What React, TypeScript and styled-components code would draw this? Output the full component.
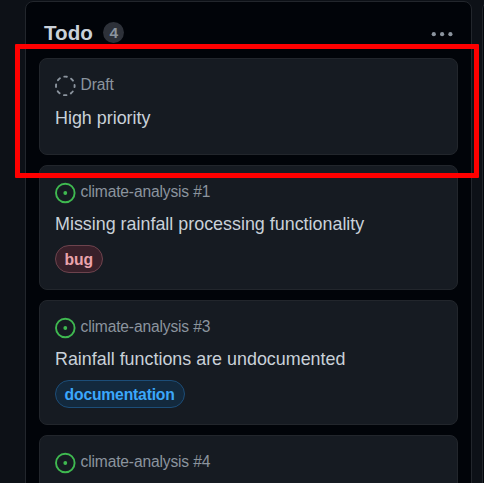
import React from "react";
import styled, { createGlobalStyle } from "styled-components";

const GlobalStyle = createGlobalStyle`
  * { box-sizing: border-box; }
  body {
    margin: 0;
    background: #0d1117;
    font-family: "Liberation Sans", Arial, Helvetica, sans-serif;
    overflow: hidden;
  }
`;

const Board = styled.main`
  position: relative;
  display: flex;
  gap: 10px;
  width: 484px;
  height: 483px;
  padding: 1px 0 0 25px;
  overflow: hidden;
`;

const Column = styled.section`
  flex: none;
  width: 447px;
  height: 520px;
  padding: 0 13px;
  background: #010409;
  border: 1px solid #22262c;
  border-radius: 8px;
`;

const ColumnHeader = styled.header`
  display: flex;
  align-items: center;
  height: 56px;
  padding: 5px 5px 0 5px;
`;

const ColumnTitle = styled.h2`
  margin: 0;
  color: #c9d1d9;
  font-size: 20.6px;
  line-height: 26px;
  font-weight: 700;
`;

const Counter = styled.span`
  width: 21px;
  height: 21px;
  margin-left: 10.5px;
  border-radius: 50%;
  background: #2d3139;
  color: #8b949e;
  font-size: 15.5px;
  line-height: 21px;
  font-weight: 700;
  text-align: center;
`;

const MenuButton = styled.button`
  display: flex;
  margin: 3px 0 0 auto;
  padding: 0;
  border: 0;
  background: none;
`;

const CardList = styled.div`
  display: flex;
  flex-direction: column;
  gap: 10px;
`;

const Card = styled.article<{ $height: number }>`
  height: ${(p) => p.$height}px;
  padding: 15px;
  background: #161b22;
  border: 1px solid #22262c;
  border-radius: 8px;
`;

const Meta = styled.div`
  display: flex;
  height: 22px;
  gap: 4.6px;
  color: #8b949e;
  font-size: 15.6px;
  letter-spacing: -0.16px;
  line-height: 22px;
  white-space: nowrap;

  svg { flex: none; margin-top: 1px; }
`;

const Title = styled.h3<{ $lowered: boolean }>`
  margin: ${(p) => (p.$lowered ? 10 : 9)}px 0 0;
  color: #c9d1d9;
  font-size: 17.9px;
  line-height: 24px;
  font-weight: 400;
  white-space: nowrap;
`;

const Label = styled.span<{ $tone: "bug" | "documentation" }>`
  display: inline-block;
  height: 28px;
  margin-top: 9px;
  padding: 0 9px 0 8.6px;
  border: 1px solid ${(p) => (p.$tone === "bug" ? "#6d434d" : "#1c4d78")};
  border-radius: 14px;
  background: ${(p) => (p.$tone === "bug" ? "#39202a" : "#13293d")};
  color: ${(p) => (p.$tone === "bug" ? "#eba3ac" : "#3ba7fb")};
  font-size: 15.7px;
  letter-spacing: -0.18px;
  line-height: 27px;
  font-weight: 700;
`;

const Highlight = styled.div`
  position: absolute;
  left: 15px;
  top: 44px;
  width: 464px;
  height: 134px;
  border: 5px solid #ff0000;
  border-radius: 1px;
`;

const DraftIcon = () => (
  <svg width="21" height="21" viewBox="0 0 21 21" fill="none">
    <circle
      cx="10.3"
      cy="10.9"
      r="9.3"
      stroke="#8b949e"
      strokeWidth="1.9"
      strokeLinecap="round"
      strokeDasharray="2.6 4.704"
      strokeDashoffset="1.3"
    />
  </svg>
);

const OpenIcon = () => (
  <svg width="21" height="22" viewBox="0 0 21 22" fill="none">
    <circle cx="10.3" cy="11" r="9.3" stroke="#3fb950" strokeWidth="1.9" />
    <circle cx="10.3" cy="11" r="1.9" fill="#3fb950" />
  </svg>
);

const KebabIcon = () => (
  <svg width="22" height="6" viewBox="0 0 22 6" fill="#8b949e">
    <circle cx="2.8" cy="3.2" r="2.1" />
    <circle cx="11.1" cy="3.2" r="2.1" />
    <circle cx="19.4" cy="3.2" r="2.1" />
  </svg>
);

type Item = {
  meta: string;
  title: string;
  label?: "bug" | "documentation";
};

const items: Item[] = [
  { meta: "Draft", title: "High priority" },
  { meta: "climate-analysis #1", title: "Missing rainfall processing functionality", label: "bug" },
  { meta: "climate-analysis #3", title: "Rainfall functions are undocumented", label: "documentation" },
  { meta: "climate-analysis #4", title: "" },
];

export default function App() {
  return (
    <>
      <GlobalStyle />
      <Board>
        <Column>
          <ColumnHeader>
            <ColumnTitle>Todo</ColumnTitle>
            <Counter>4</Counter>
            <MenuButton aria-label="Column options">
              <KebabIcon />
            </MenuButton>
          </ColumnHeader>
          <CardList>
            {items.map((item) => (
              <Card key={item.meta} $height={item.meta === "Draft" ? 97 : 125}>
                <Meta>
                  {item.meta === "Draft" ? <DraftIcon /> : <OpenIcon />}
                  <span>{item.meta}</span>
                </Meta>
                {item.title && <Title $lowered={!item.label}>{item.title}</Title>}
                {item.label && <Label $tone={item.label}>{item.label}</Label>}
              </Card>
            ))}
          </CardList>
        </Column>
        <Column />
        <Highlight />
      </Board>
    </>
  );
}
